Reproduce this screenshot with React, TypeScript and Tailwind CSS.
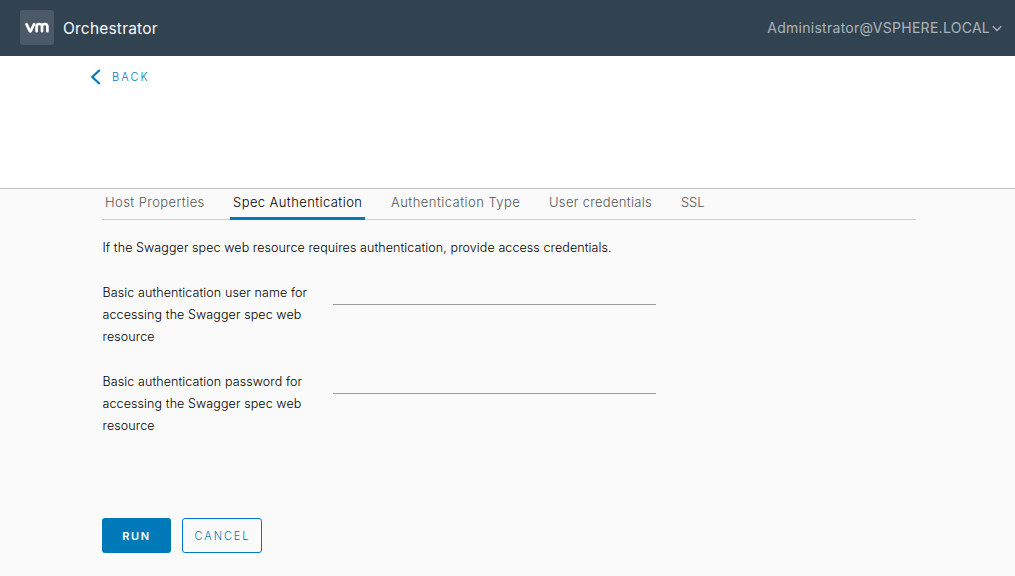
import { useState } from "react";

const tabs = [
  { label: "Host Properties", className: "w-[105px] tracking-[0.43px]" },
  { label: "Spec Authentication", className: "w-[135px] tracking-[0.42px]" },
  { label: "Authentication Type", className: "w-[135px] tracking-[0.46px]" },
  { label: "User credentials", className: "w-[109px] tracking-[0.3px]" },
  { label: "SSL", className: "w-[29px] tracking-[-0.1px]" },
];

function Header() {
  return (
    <header className="flex h-14 items-center bg-[#314351] pr-[13px] pl-5">
      <div className="mb-px flex h-[35px] w-[34px] items-center justify-center rounded-[3px] bg-[#4c5a68]">
        <svg width="24" height="12" viewBox="0 0 24 12" fill="none" stroke="#ffffff" strokeWidth="2.7" strokeLinecap="round" strokeLinejoin="round" aria-label="vm">
          <path d="M1.5 2.2 L4.8 9 Q5.3 9.8 5.8 9 L9.1 2.2" />
          <path d="M11.6 9.2 V4.6 Q11.6 2 14.3 2 Q17 2 17 4.6 V9.2 M17 4.6 Q17 2 19.7 2 Q22.4 2 22.4 4.6 V9.2" />
        </svg>
      </div>
      <span className="mt-[2px] ml-[9px] text-[15.5px] leading-6 tracking-[0.2px] text-[#fafafa]">Orchestrator</span>
      <button className="ml-auto flex items-center gap-[2px] text-[#adb4b9]">
        <span className="text-sm leading-6 tracking-[0.27px]">Administrator@VSPHERE.LOCAL</span>
        <svg width="10" height="7" viewBox="0 0 10 7" fill="none" stroke="currentColor" strokeWidth="1.4">
          <path d="M0.8 1.2 L5 5.4 L9.2 1.2" />
        </svg>
      </button>
    </header>
  );
}

function Field({ label, type }: { label: string; type: string }) {
  return (
    <label className="flex h-[89px] items-start">
      <span className="w-[231px] pr-5 pl-[0.5px] text-[12.5px] leading-[22px] font-light tracking-[0.1px] text-black">{label}</span>
      <input type={type} className="h-[23px] w-[323px] border-b border-[#999999] bg-transparent text-[13px] outline-none" />
    </label>
  );
}

export default function App() {
  const [active, setActive] = useState(1);
  return (
    <div className="flex h-[576px] flex-col overflow-hidden bg-[#fafafa] font-['Inter',sans-serif]">
      <Header />
      <div className="h-[133px] border-b border-[#c1c1c1] bg-white pt-[9px] pl-[90px]">
        <button className="flex items-center gap-[11px] text-[#0079b8]">
          <svg className="mb-px" width="11" height="16" viewBox="0 0 11 16" fill="none" stroke="currentColor" strokeWidth="2.2">
            <path d="M9.7 1 L2.3 8 L9.7 15" />
          </svg>
          <span className="text-[11px] leading-6 font-light tracking-[2.1px]">BACK</span>
        </button>
      </div>
      <main className="w-[916px] pl-[102px]">
        <nav className="flex h-[31px] gap-[23px] shadow-[inset_0_-1px_0_#cccccc]">
          {tabs.map((tab, i) => (
            <button
              key={tab.label}
              onClick={() => setActive(i)}
              className={`${tab.className} shrink-0 pb-[5px] pl-[3px] text-left text-[13px] leading-[26px] font-light whitespace-nowrap ${
                active === i ? "text-black shadow-[inset_0_-3px_0_#0079b8]" : "text-[#565656]"
              }`}
            >
              {tab.label}
            </button>
          ))}
        </nav>
        <p className="mt-[17px] pl-[0.5px] text-[12.5px] leading-[22px] font-light tracking-[0.09px] text-black">
          If the Swagger spec web resource requires authentication, provide access credentials.
        </p>
        <div className="mt-[23px]">
          <Field label="Basic authentication user name for accessing the Swagger spec web resource" type="text" />
          <Field label="Basic authentication password for accessing the Swagger spec web resource" type="password" />
        </div>
        <div className="mt-[58px] flex gap-[11px] text-[11px]">
          <button className="h-[35px] w-[69px] rounded-[3px] bg-[#0079b8] pt-[2px] font-semibold tracking-[1.7px] text-white">RUN</button>
          <button className="h-[35px] w-20 rounded-[3px] border border-[#0079b8] pt-[2px] pl-px font-light tracking-[1.9px] text-[#0079b8]">CANCEL</button>
        </div>
      </main>
    </div>
  );
}
